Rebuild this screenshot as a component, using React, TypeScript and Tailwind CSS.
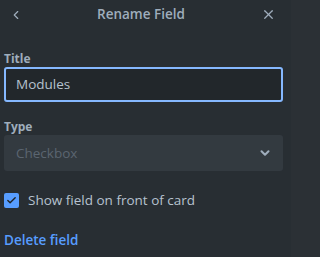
import { ChevronLeft, ChevronDown, X, Check } from "lucide-react";

export default function App() {
  return (
    <div
      className="w-full min-w-[294px] h-[257px] bg-[#2b3035] flex"
      style={{ fontFamily: '"Open Sans", "Noto Sans", sans-serif' }}
    >
      <div className="w-[291px] h-full bg-[#282e33] flex flex-col">
        <header className="h-[29px] flex items-center justify-between px-[9px]">
          <button className="w-[14px] h-[20px] flex items-center justify-center text-[#9fadbc]">
            <ChevronLeft className="w-[14px] h-[14px]" strokeWidth={2} />
          </button>
          <h2 className="text-[13.5px] font-semibold text-[#9fadbc] leading-none">
            Rename Field
          </h2>
          <button className="w-[20px] h-[20px] flex items-center justify-center text-[#9fadbc] mr-[3px]">
            <X className="w-[15px] h-[15px]" strokeWidth={2} />
          </button>
        </header>

        <div className="flex flex-col pl-[4px] pr-[8px]">
          <label className="mt-[22px] text-[12px] font-bold text-[#9fadbc] leading-[16px]">
            Title
          </label>
          <div className="mt-0 h-[35px] rounded-[3px] border-2 border-[#85b8ff] bg-[#22272b] flex items-center px-[10px]">
            <span className="text-[13.5px] text-[#b6c2cf]">Modules</span>
          </div>

          <label className="mt-[17px] text-[12px] font-bold text-[#9fadbc] leading-[16px]">
            Type
          </label>
          <div className="mt-0 h-[36px] rounded-[3px] bg-[#333a40] flex items-center justify-between pl-[12px] pr-[11px]">
            <span className="text-[13.5px] text-[#5b6570]">Checkbox</span>
            <ChevronDown className="w-[14px] h-[14px] text-[#9fadbc]" strokeWidth={3.5} />
          </div>

          <label className="mt-[19px] flex items-center gap-[9px]">
            <span className="w-[15px] h-[15px] rounded-[2px] bg-[#579dff] flex items-center justify-center">
              <Check className="w-[11px] h-[11px] text-[#1d2125]" strokeWidth={3} />
            </span>
            <span className="text-[13.5px] text-[#b6c2cf]">Show field on front of card</span>
          </label>

          <button className="mt-[20px] self-start text-[13.5px] font-semibold text-[#579dff] leading-[20px]">
            Delete field
          </button>
        </div>
      </div>
    </div>
  );
}
